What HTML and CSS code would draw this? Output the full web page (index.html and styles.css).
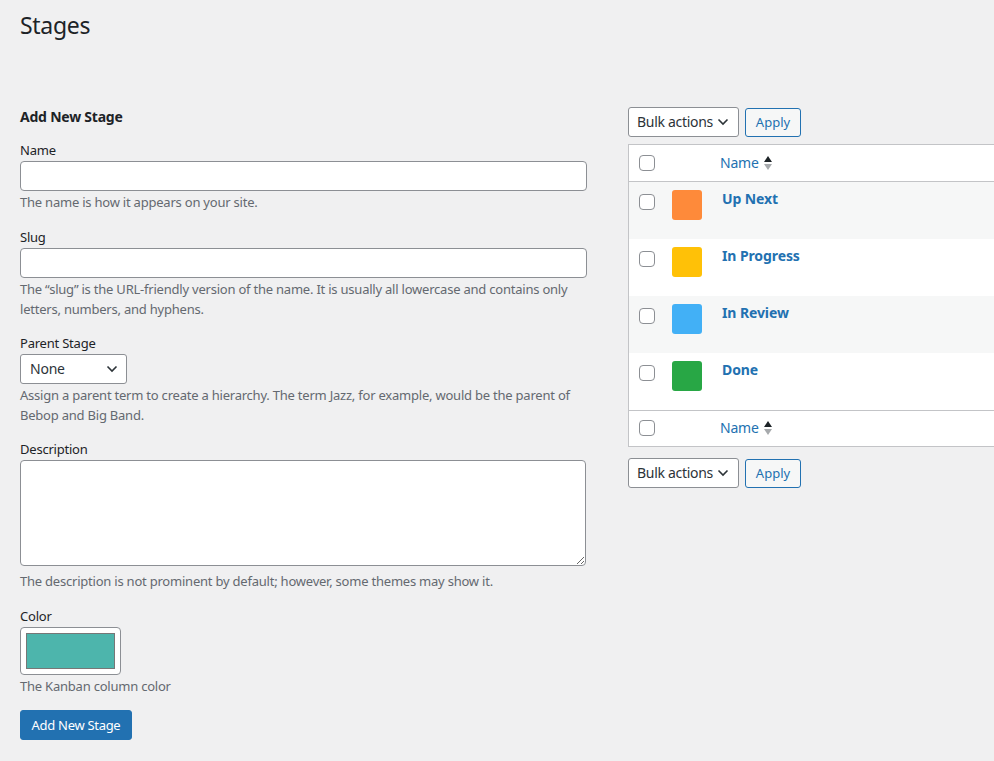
FILE: index.html
```html
<!DOCTYPE html>
<html>
<head>
<meta charset="utf-8">
<link rel="stylesheet" href="styles.css">
</head>
<body>
<div class="wrap">
  <h1 class="page-title">Stages</h1>
  <div class="cols">
    <div class="col-left">
      <h2 class="form-title">Add New Stage</h2>
      <div class="field">
        <label class="lbl">Name</label>
        <input class="text-input" type="text">
        <p class="desc">The name is how it appears on your site.</p>
      </div>
      <div class="field tight">
        <label class="lbl">Slug</label>
        <input class="text-input" type="text">
        <p class="desc">The “slug” is the URL-friendly version of the name. It is usually all lowercase and contains only letters, numbers, and hyphens.</p>
      </div>
      <div class="field tight">
        <label class="lbl">Parent Stage</label>
        <div class="select parent-select"><span>None</span><svg class="chev" width="12" height="8" viewBox="0 0 12 8"><path d="M1.5 1.5 L6 6 L10.5 1.5" fill="none" stroke="#2c3338" stroke-width="1.6"/></svg></div>
        <p class="desc">Assign a parent term to create a hierarchy. The term Jazz, for example, would be the parent of Bebop and Big Band.</p>
      </div>
      <div class="field">
        <label class="lbl">Description</label>
        <textarea class="textarea"></textarea>
        <p class="desc desc-ta">The description is not prominent by default; however, some themes may show it.</p>
      </div>
      <div class="field">
        <label class="lbl">Color</label>
        <div class="color-btn"><div class="color-swatch"></div></div>
        <p class="desc">The Kanban column color</p>
      </div>
      <button class="primary-btn">Add New Stage</button>
    </div>
    <div class="col-right">
      <div class="tablenav">
        <div class="select bulk-select"><span>Bulk actions</span><svg class="chev" width="12" height="8" viewBox="0 0 12 8"><path d="M1.5 1.5 L6 6 L10.5 1.5" fill="none" stroke="#2c3338" stroke-width="1.6"/></svg></div>
        <button class="apply-btn">Apply</button>
      </div>
      <div class="table">
        <div class="row head">
          <div class="cb-cell"><span class="cb"></span></div>
          <div class="name-head">Name <svg class="sort" width="10" height="16" viewBox="0 0 10 16"><path d="M1 7 L5 1 L9 7 Z" fill="#1d2327"/><path d="M1 9 L5 15 L9 9 Z" fill="#a7aaad"/></svg></div>
        </div>
        <div class="row item alt">
          <div class="cb-cell"><span class="cb"></span></div>
          <div class="swatch-cell"><span class="sq" style="background:#fe8a3a"></span></div>
          <a class="row-title">Up Next</a>
        </div>
        <div class="row item">
          <div class="cb-cell"><span class="cb"></span></div>
          <div class="swatch-cell"><span class="sq" style="background:#ffc107"></span></div>
          <a class="row-title">In Progress</a>
        </div>
        <div class="row item alt">
          <div class="cb-cell"><span class="cb"></span></div>
          <div class="swatch-cell"><span class="sq" style="background:#42b0f6"></span></div>
          <a class="row-title">In Review</a>
        </div>
        <div class="row item">
          <div class="cb-cell"><span class="cb"></span></div>
          <div class="swatch-cell"><span class="sq" style="background:#28a745"></span></div>
          <a class="row-title">Done</a>
        </div>
        <div class="row foot">
          <div class="cb-cell"><span class="cb"></span></div>
          <div class="name-head">Name <svg class="sort" width="10" height="16" viewBox="0 0 10 16"><path d="M1 7 L5 1 L9 7 Z" fill="#1d2327"/><path d="M1 9 L5 15 L9 9 Z" fill="#a7aaad"/></svg></div>
        </div>
      </div>
      <div class="tablenav bottom">
        <div class="select bulk-select"><span>Bulk actions</span><svg class="chev" width="12" height="8" viewBox="0 0 12 8"><path d="M1.5 1.5 L6 6 L10.5 1.5" fill="none" stroke="#2c3338" stroke-width="1.6"/></svg></div>
        <button class="apply-btn">Apply</button>
      </div>
    </div>
  </div>
</div>
</body>
</html>
```
FILE: styles.css
```css
html, body {
  margin: 0;
  padding: 0;
  overflow: hidden;
}
body {
  background: #f0f0f1;
  color: #1d2327;
  font-family: "Noto Sans", "Open Sans", sans-serif;
  font-size: 13px;
  line-height: 20px;
  letter-spacing: -0.22px;
  width: 994px;
  height: 761px;
}
.wrap {
  padding-left: 20px;
}
.page-title {
  margin: 0;
  padding-top: 10px;
  font-size: 23px;
  font-weight: 400;
  line-height: 30px;
  letter-spacing: -0.3px;
  color: #1d2327;
}
.cols {
  display: flex;
  margin-top: 67px;
  gap: 41px;
}
.col-left {
  width: 567px;
  flex: none;
}
.form-title {
  margin: 0 0 13px;
  font-size: 14px;
  font-weight: 700;
  line-height: 20px;
}
.field {
  margin-bottom: 15px;
}
.field.tight {
  margin-bottom: 14px;
}
.lbl {
  display: block;
  line-height: 20px;
  margin-bottom: 1px;
}
.text-input {
  display: block;
  box-sizing: border-box;
  width: 567px;
  height: 30px;
  margin: 0;
  border: 1px solid #8c8f94;
  border-radius: 4px;
  background: #fff;
  font: inherit;
}
.desc {
  margin: 1px 0 0;
  color: #646970;
  line-height: 20px;
}
.desc-ta {
  margin-top: 5px;
}
.select {
  box-sizing: border-box;
  height: 30px;
  border: 1px solid #8c8f94;
  border-radius: 3px;
  background: #fff;
  display: flex;
  align-items: center;
  justify-content: space-between;
  font-size: 14px;
  color: #2c3338;
  white-space: nowrap;
}
.parent-select {
  width: 107px;
  padding: 0 8px 0 9px;
}
.textarea {
  display: block;
  box-sizing: border-box;
  width: 566px;
  height: 106px;
  margin: 0;
  border: 1px solid #8c8f94;
  border-radius: 4px;
  background: #fff;
  font: inherit;
}
.color-btn {
  box-sizing: border-box;
  width: 101px;
  height: 48px;
  border: 1px solid #8c8f94;
  border-radius: 4px;
  background: #fff;
  padding: 5px;
}
.color-swatch {
  box-sizing: border-box;
  width: 100%;
  height: 100%;
  background: #4db5ac;
  border: 1px solid #777;
}
.primary-btn {
  box-sizing: border-box;
  width: 112px;
  height: 30px;
  padding: 0;
  margin-top: -1px;
  background: #2271b1;
  border: 1px solid #2271b1;
  border-radius: 3px;
  color: #fff;
  font: inherit;
  font-size: 13px;
  letter-spacing: -0.3px;
}
.col-right {
  width: 420px;
  flex: none;
}
.tablenav {
  display: flex;
  align-items: center;
  gap: 6px;
  height: 30px;
}
.tablenav.bottom {
  margin-top: 11px;
}
.bulk-select {
  width: 111px;
  padding: 0 9px 0 8px;
  letter-spacing: -0.3px;
}
.apply-btn {
  box-sizing: border-box;
  height: 29px;
  width: 56px;
  padding: 0;
  border: 1px solid #2271b1;
  border-radius: 3px;
  background: #f6f7f7;
  color: #2271b1;
  font: inherit;
  font-size: 13px;
}
.table {
  margin-top: 7px;
  border: 1px solid #c3c4c7;
  border-right: none;
  background: #fff;
  width: 420px;
}
.row {
  display: flex;
  align-items: flex-start;
}
.head {
  height: 36px;
  border-bottom: 1px solid #c3c4c7;
  align-items: center;
}
.foot {
  border-top: 1px solid #c3c4c7;
  align-items: center;
  padding-bottom: 1px;
  box-sizing: border-box;
  height: 36px;
}
.item {
  height: 57px;
}
.alt {
  background: #f6f7f7;
}
.cb-cell {
  width: 43px;
  padding-left: 10px;
  box-sizing: border-box;
  flex: none;
}
.item .cb-cell {
  padding-top: 12px;
}
.cb {
  display: block;
  box-sizing: border-box;
  width: 16px;
  height: 16px;
  border: 1px solid #8c8f94;
  border-radius: 4px;
  background: #fff;
}
.swatch-cell {
  width: 50px;
  flex: none;
  padding-top: 8px;
}
.sq {
  display: block;
  width: 30px;
  height: 30px;
  border-radius: 3px;
}
.row-title {
  padding-top: 7px;
  font-size: 14px;
  font-weight: 700;
  color: #2271b1;
  line-height: 20px;
  letter-spacing: -0.1px;
}
.name-head {
  padding-left: 48px;
  color: #2271b1;
  font-size: 14px;
  display: flex;
  align-items: center;
  gap: 4px;
}
.sort {
  display: block;
}
```
